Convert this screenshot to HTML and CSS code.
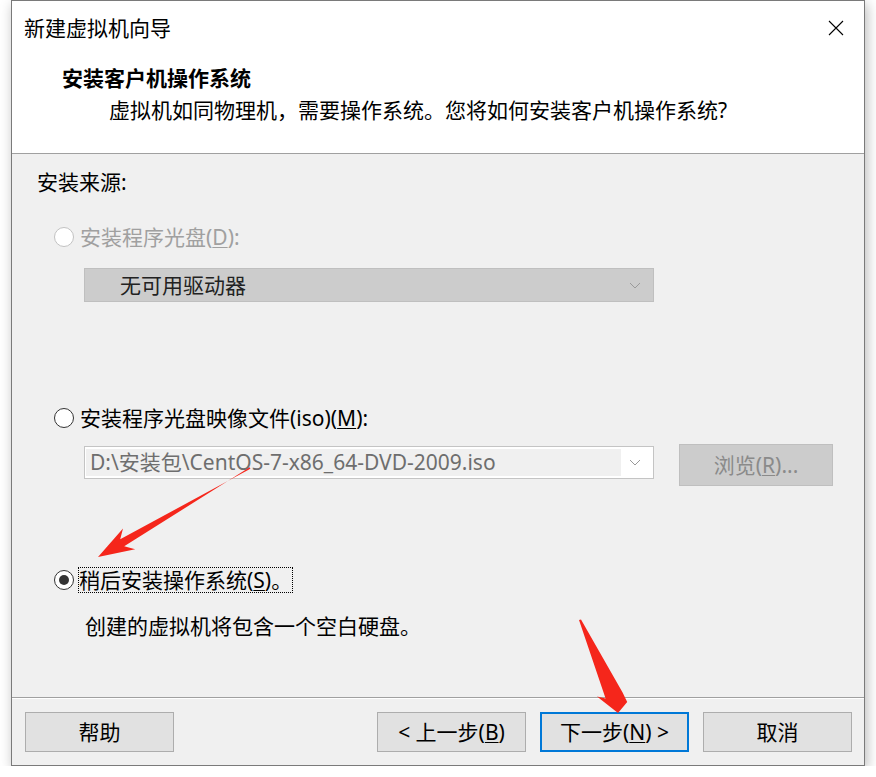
FILE: index.html
```html
<!DOCTYPE html>
<html lang="zh-CN">
<head>
  <meta charset="UTF-8">
  <title>新建虚拟机向导</title>
  <link rel="stylesheet" href="styles.css">
</head>
<body>
  <div class="dialog">
    <!-- タイトルバー -->
    <div class="titlebar">
      <span class="title">新建虚拟机向导</span>
      <svg class="close" width="16" height="16" viewBox="0 0 16 16">
        <path d="M1 1 L15 15 M15 1 L1 15" stroke="#000" stroke-width="1.1" fill="none"/>
      </svg>
    </div>

    <!-- ページ見出し -->
    <div class="header">
      <div class="header-title">安装客户机操作系统</div>
      <div class="header-sub">虚拟机如同物理机，需要操作系统。您将如何安装客户机操作系统?</div>
    </div>

    <!-- 本体 -->
    <div class="content">
      <div class="group-label">安装来源:</div>

      <div class="radio-row row-disc disabled">
        <span class="radio"></span>
        <span>安装程序光盘(<u>D</u>):</span>
      </div>
      <div class="combo combo-disabled">
        <span class="combo-text">无可用驱动器</span>
        <svg class="chevron" width="12" height="7" viewBox="0 0 12 7">
          <path d="M1 1 L6 6 L11 1" stroke="#9a9a9a" stroke-width="1" fill="none"/>
        </svg>
      </div>

      <div class="radio-row row-iso">
        <span class="radio"></span>
        <span>安装程序光盘映像文件(iso)(<u>M</u>):</span>
      </div>
      <div class="iso-row">
        <div class="combo combo-iso">
          <span class="combo-field">D:\安装包\CentOS-7-x86_64-DVD-2009.iso</span>
          <svg class="chevron" width="12" height="7" viewBox="0 0 12 7">
            <path d="M1 1 L6 6 L11 1" stroke="#9a9a9a" stroke-width="1" fill="none"/>
          </svg>
        </div>
        <button class="btn btn-browse">浏览(<u>R</u>)...</button>
      </div>

      <div class="radio-row row-later">
        <span class="radio checked"></span>
        <span class="focus">稍后安装操作系统(<u>S</u>)。</span>
      </div>
      <div class="desc">创建的虚拟机将包含一个空白硬盘。</div>
    </div>

    <!-- ボタン -->
    <div class="footer">
      <button class="btn">帮助</button>
      <div class="nav">
        <button class="btn">&lt; 上一步(<u>B</u>)</button>
        <button class="btn btn-default">下一步(<u>N</u>) &gt;</button>
        <button class="btn">取消</button>
      </div>
    </div>
  </div>

  <!-- 赤い矢印（注釈） -->
  <svg class="arrows" width="876" height="777" viewBox="0 0 876 777">
    <polygon fill="#f5261b" points="250.4,468.7 249.6,467.3 124.2,546.3 135.2,549.2 98,557 123.0,528.4 120.2,539.3"/>
    <polygon fill="#f5261b" points="579,620 581,619.4 622.6,692.6 627.2,702 618,713 597,696.4 605.6,698.6"/>
  </svg>
</body>
</html>
```

FILE: styles.css
```css
/* ダイアログ全体 */
body {
  margin: 0;
  background: #fff;
  font-family: "Noto Sans", "Noto Sans CJK SC", sans-serif;
  font-size: 21px;
  color: #000;
  position: relative;
}
.dialog {
  margin-left: 11px;
  width: 854px;
  height: 766px;
  box-sizing: border-box;
  border: 1px solid #7a7a7a;
  background: #f0f0f0;
  box-shadow: 2px 4px 12px rgba(0, 0, 0, 0.28);
}
u {
  text-decoration-thickness: 1px;
  text-underline-offset: 2px;
}

/* タイトルバー */
.titlebar {
  height: 53px;
  background: #fff;
  display: flex;
  align-items: center;
  justify-content: space-between;
  padding: 0 20px 0 12px;
}
.title {
  line-height: 26px;
}
.close {
  display: block;
}

/* 見出し */
.header {
  height: 100px;
  box-sizing: border-box;
  background: #fff;
  border-bottom: 1px solid #a0a0a0;
  padding: 11px 0 0 50px;
}
.header-title {
  font-weight: bold;
  line-height: 26px;
}
.header-sub {
  margin: 6px 0 0 47px;
  line-height: 26px;
}

/* 本体 */
.content {
  height: 543px;
  box-sizing: border-box;
  padding: 15px 0 0 25px;
}
.group-label {
  line-height: 26px;
}
.radio-row {
  display: flex;
  align-items: center;
  gap: 6px;
  height: 26px;
  padding-left: 17px;
  line-height: 26px;
}
.radio {
  width: 18px;
  height: 18px;
  border: 1px solid #333;
  border-radius: 50%;
  background: #fff;
  display: flex;
  align-items: center;
  justify-content: center;
}
.radio.checked::after {
  content: "";
  width: 10px;
  height: 10px;
  border-radius: 50%;
  background: #333;
}
.disabled {
  color: #a0a0a0;
}
.disabled .radio {
  border-color: #c2c2c2;
}
.row-disc {
  margin-top: 29px;
}
.row-iso {
  margin-top: 103px;
}
.row-later {
  margin-top: 81px;
}
.focus {
  margin-left: -2px;
  padding: 0 1px;
  outline: 1px dotted #000;
  outline-offset: -1px;
}
.desc {
  margin: 20px 0 0 48px;
  line-height: 26px;
}

/* コンボボックス */
.combo {
  width: 570px;
  box-sizing: border-box;
  display: flex;
  align-items: center;
  justify-content: space-between;
  margin-left: 47px;
}
.combo-disabled {
  height: 34px;
  margin-top: 18px;
  background: #cccccc;
  border: 1px solid #bfbfbf;
  padding: 0 12px 0 35px;
}
.combo-text {
  color: #222;
  line-height: 26px;
}
.iso-row {
  display: flex;
  align-items: flex-start;
  margin-top: 13px;
}
.combo-iso {
  height: 33px;
  margin-top: 2px;
  background: #fff;
  border: 1px solid #c4c4c4;
  padding: 2px 12px 2px 1px;
}
.combo-field {
  width: 535px;
  height: 27px;
  box-sizing: border-box;
  background: #f0f0f0;
  color: #6e6e6e;
  padding-left: 4px;
  line-height: 27px;
  white-space: nowrap;
  overflow: hidden;
}
.chevron {
  display: block;
}

/* ボタン */
.btn {
  font: inherit;
  width: 149px;
  height: 40px;
  box-sizing: border-box;
  background: #e1e1e1;
  border: 1px solid #adadad;
  color: #000;
  padding: 0;
  line-height: 26px;
}
.btn-browse {
  width: 154px;
  height: 42px;
  margin-left: 25px;
  background: #cccccc;
  border-color: #bfbfbf;
  color: #8a8a8a;
}
.btn-default {
  border: 2px solid #0078d7;
}

/* フッター */
.footer {
  height: 67px;
  box-sizing: border-box;
  border-top: 1px solid #a0a0a0;
  box-shadow: inset 0 1px #fff;
  display: flex;
  justify-content: space-between;
  align-items: flex-start;
  padding: 14px 12px 0 13px;
}
.nav {
  display: flex;
  gap: 14px;
}

/* 注釈の矢印 */
.arrows {
  position: absolute;
  top: 0;
  left: 0;
  pointer-events: none;
}
```
